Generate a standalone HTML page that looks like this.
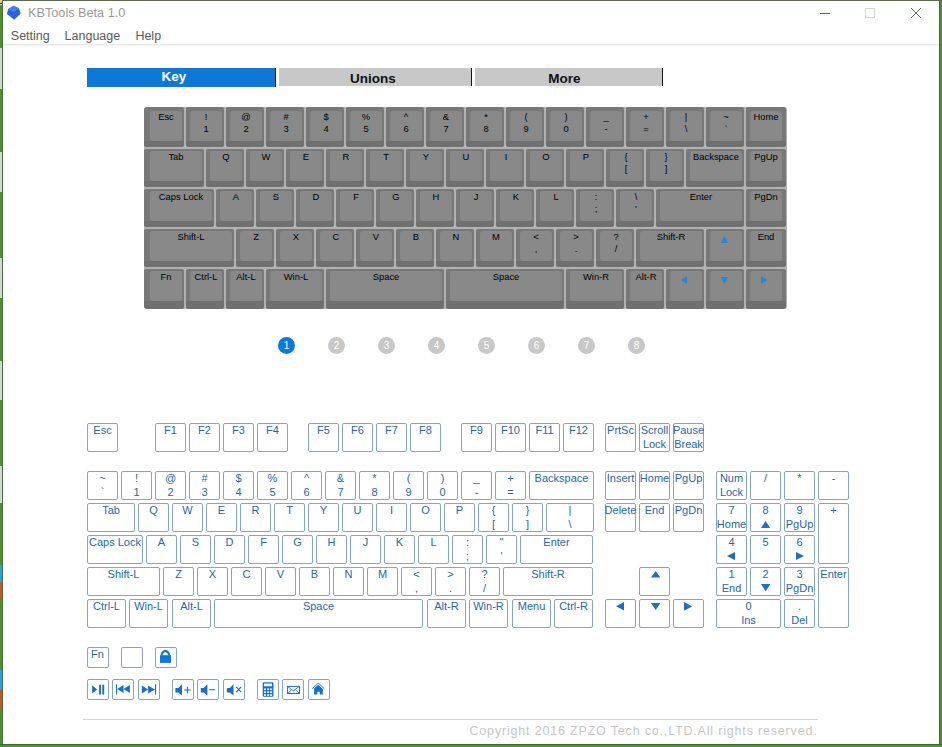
<!DOCTYPE html><html><head><meta charset="utf-8"><style>
*{margin:0;padding:0;box-sizing:border-box}
html,body{width:942px;height:747px;overflow:hidden;background:#4a8a2a;font-family:"Liberation Sans", sans-serif}
.a{position:absolute}
.kb{position:absolute;left:144px;top:107px;width:643px;height:202px;background:#b2b2b2;border-radius:3px;overflow:hidden}
.uk{position:absolute;background:#7b7b7b;border-radius:2px}
.ui{position:absolute;background:#898989;border-radius:3px}
.ut{position:absolute;text-align:center;font-size:9.4px;line-height:9px;height:9px;color:#000;white-space:nowrap}
.lk{position:absolute;border:1px solid #86a4c4;border-radius:2px;background:#fff}
.lt{position:absolute;left:-8px;right:-8px;text-align:center;font-size:11px;line-height:11px;height:11px;color:#2566ae;white-space:nowrap}
.dot{position:absolute;width:17.5px;height:17.5px;border-radius:50%;background:#c8c8c8;color:#fff;font-size:10px;line-height:17.5px;text-align:center}
</style></head><body>
<div class="a" style="left:0;top:0;width:942px;height:747px;background:#4f8f30"></div>
<div class="a" style="left:2px;top:0;width:1px;height:747px;background:#44703a"></div>
<div class="a" style="left:0;top:744px;width:942px;height:1px;background:#3d6a2a"></div>
<div class="a" style="left:939px;top:0;width:1px;height:745px;background:#3d6a2a"></div>
<div class="a" style="left:0;top:0;width:942px;height:1px;background:#5a6a4a"></div>
<div class="a" style="left:0;top:48px;width:2px;height:41px;background:#d6d6d6"></div>
<div class="a" style="left:0;top:152px;width:2px;height:40px;background:#d6d6d6"></div>
<div class="a" style="left:0;top:258px;width:2px;height:40px;background:#d6d6d6"></div>
<div class="a" style="left:0;top:361px;width:2px;height:39px;background:#d6d6d6"></div>
<div class="a" style="left:0;top:466px;width:2px;height:37px;background:#d6d6d6"></div>
<div class="a" style="left:0;top:565px;width:2px;height:17px;background:#2a9fdc"></div>
<div class="a" style="left:0;top:582px;width:2px;height:18px;background:#c8542e"></div>
<div class="a" style="left:0;top:670px;width:2px;height:20px;background:#2a9fdc"></div>
<div class="a" style="left:0;top:690px;width:2px;height:20px;background:#c8542e"></div>
<div class="a" style="left:0;top:0;width:2px;height:3px;background:#d8c890"></div>
<div class="a" style="left:0;top:3px;width:2px;height:1px;background:#202020"></div>
<div class="a" style="left:0;top:4px;width:2px;height:1px;background:#e0e0e0"></div>
<div class="a" style="left:3px;top:1px;width:936px;height:743px;background:#fff"></div>
<svg class="a" style="left:6px;top:5px" width="16" height="16" viewBox="6 5 16 16"><polygon points="13.4,5.8 19,8.2 20.6,13.8 14.2,19.7 6.9,14 8,9.2" fill="#2f62da"/><polygon points="13.4,5.8 19,8.2 14,12 8,9.2" fill="#4a80ee"/></svg>
<div class="a" style="left:28px;top:6.3px;font-size:12.7px;line-height:15px;color:#9a9a9a;white-space:nowrap">KBTools Beta 1.0</div>
<div class="a" style="left:820px;top:13px;width:10px;height:1px;background:#666"></div>
<div class="a" style="left:865px;top:8px;width:10px;height:10px;border:1px solid #d4d4d4"></div>
<svg class="a" style="left:910px;top:7px" width="12" height="12" viewBox="0 0 12 12"><path d="M1 1L11 11M11 1L1 11" stroke="#666" stroke-width="1"/></svg>
<div class="a" style="left:10.8px;top:29px;font-size:12.5px;line-height:15px;color:#5a5a5a;white-space:nowrap">Setting</div>
<div class="a" style="left:64.6px;top:29px;font-size:12.5px;line-height:15px;color:#5a5a5a;white-space:nowrap">Language</div>
<div class="a" style="left:135.4px;top:29px;font-size:12.5px;line-height:15px;color:#5a5a5a;white-space:nowrap">Help</div>
<div class="a" style="left:3px;top:44px;width:936px;height:1px;background:#e8e8e8"></div>
<div class="a" style="left:3px;top:45px;width:936px;height:1px;background:#f4f4f4"></div>
<div class="a" style="left:87px;top:68px;width:188px;height:19px;background:#0f78d7"></div>
<div class="a" style="left:124px;top:66.5px;width:100px;height:20px;color:#fff;font-size:13.5px;font-weight:bold;line-height:20px;text-align:center">Key</div>
<div class="a" style="left:275px;top:68px;width:1px;height:19px;background:#12122a"></div>
<div class="a" style="left:279px;top:68px;width:192px;height:18px;background:#c8c8c8"></div>
<div class="a" style="left:322.8px;top:69px;width:100px;height:20px;color:#111;font-size:13.5px;font-weight:bold;line-height:20px;text-align:center">Unions</div>
<div class="a" style="left:471px;top:68px;width:1px;height:18px;background:#12122a"></div>
<div class="a" style="left:475px;top:68px;width:187px;height:18px;background:#c8c8c8"></div>
<div class="a" style="left:514.5px;top:69px;width:100px;height:20px;color:#111;font-size:13.5px;font-weight:bold;line-height:20px;text-align:center">More</div>
<div class="a" style="left:662px;top:68px;width:1px;height:18px;background:#12122a"></div>
<div class="kb">
<div class="uk" style="left:0.0px;top:0px;width:40.0px;height:40px;background:linear-gradient(#787878 0,#787878 34px,#707070 34px)"></div>
<div class="ui" style="left:6.0px;top:4px;width:32px;height:30px"></div>
<div class="ut" style="left:-8.0px;width:60px;top:4.8px">Esc</div>
<div class="uk" style="left:42.0px;top:0px;width:38.0px;height:40px;background:linear-gradient(#787878 0,#787878 34px,#707070 34px)"></div>
<div class="ui" style="left:46.0px;top:4px;width:32px;height:30px"></div>
<div class="ut" style="left:32.0px;width:60px;top:4.8px">!</div>
<div class="ut" style="left:32.0px;width:60px;top:17.1px">1</div>
<div class="uk" style="left:82.0px;top:0px;width:38.0px;height:40px;background:linear-gradient(#787878 0,#787878 34px,#707070 34px)"></div>
<div class="ui" style="left:86.0px;top:4px;width:32px;height:30px"></div>
<div class="ut" style="left:72.0px;width:60px;top:4.8px">@</div>
<div class="ut" style="left:72.0px;width:60px;top:17.1px">2</div>
<div class="uk" style="left:122.0px;top:0px;width:38.0px;height:40px;background:linear-gradient(#787878 0,#787878 34px,#707070 34px)"></div>
<div class="ui" style="left:126.0px;top:4px;width:32px;height:30px"></div>
<div class="ut" style="left:112.0px;width:60px;top:4.8px">#</div>
<div class="ut" style="left:112.0px;width:60px;top:17.1px">3</div>
<div class="uk" style="left:162.0px;top:0px;width:38.0px;height:40px;background:linear-gradient(#787878 0,#787878 34px,#707070 34px)"></div>
<div class="ui" style="left:166.0px;top:4px;width:32px;height:30px"></div>
<div class="ut" style="left:152.0px;width:60px;top:4.8px">$</div>
<div class="ut" style="left:152.0px;width:60px;top:17.1px">4</div>
<div class="uk" style="left:202.0px;top:0px;width:38.0px;height:40px;background:linear-gradient(#787878 0,#787878 34px,#707070 34px)"></div>
<div class="ui" style="left:206.0px;top:4px;width:32px;height:30px"></div>
<div class="ut" style="left:192.0px;width:60px;top:4.8px">%</div>
<div class="ut" style="left:192.0px;width:60px;top:17.1px">5</div>
<div class="uk" style="left:242.0px;top:0px;width:38.0px;height:40px;background:linear-gradient(#787878 0,#787878 34px,#707070 34px)"></div>
<div class="ui" style="left:246.0px;top:4px;width:32px;height:30px"></div>
<div class="ut" style="left:232.0px;width:60px;top:4.8px">^</div>
<div class="ut" style="left:232.0px;width:60px;top:17.1px">6</div>
<div class="uk" style="left:282.0px;top:0px;width:38.0px;height:40px;background:linear-gradient(#787878 0,#787878 34px,#707070 34px)"></div>
<div class="ui" style="left:286.0px;top:4px;width:32px;height:30px"></div>
<div class="ut" style="left:272.0px;width:60px;top:4.8px">&amp;</div>
<div class="ut" style="left:272.0px;width:60px;top:17.1px">7</div>
<div class="uk" style="left:322.0px;top:0px;width:38.0px;height:40px;background:linear-gradient(#787878 0,#787878 34px,#707070 34px)"></div>
<div class="ui" style="left:326.0px;top:4px;width:32px;height:30px"></div>
<div class="ut" style="left:312.0px;width:60px;top:4.8px">*</div>
<div class="ut" style="left:312.0px;width:60px;top:17.1px">8</div>
<div class="uk" style="left:362.0px;top:0px;width:38.0px;height:40px;background:linear-gradient(#787878 0,#787878 34px,#707070 34px)"></div>
<div class="ui" style="left:366.0px;top:4px;width:32px;height:30px"></div>
<div class="ut" style="left:352.0px;width:60px;top:4.8px">(</div>
<div class="ut" style="left:352.0px;width:60px;top:17.1px">9</div>
<div class="uk" style="left:402.0px;top:0px;width:38.0px;height:40px;background:linear-gradient(#787878 0,#787878 34px,#707070 34px)"></div>
<div class="ui" style="left:406.0px;top:4px;width:32px;height:30px"></div>
<div class="ut" style="left:392.0px;width:60px;top:4.8px">)</div>
<div class="ut" style="left:392.0px;width:60px;top:17.1px">0</div>
<div class="uk" style="left:442.0px;top:0px;width:38.0px;height:40px;background:linear-gradient(#787878 0,#787878 34px,#707070 34px)"></div>
<div class="ui" style="left:446.0px;top:4px;width:32px;height:30px"></div>
<div class="ut" style="left:432.0px;width:60px;top:4.8px">_</div>
<div class="ut" style="left:432.0px;width:60px;top:17.1px">-</div>
<div class="uk" style="left:482.0px;top:0px;width:38.0px;height:40px;background:linear-gradient(#787878 0,#787878 34px,#707070 34px)"></div>
<div class="ui" style="left:486.0px;top:4px;width:32px;height:30px"></div>
<div class="ut" style="left:472.0px;width:60px;top:4.8px">+</div>
<div class="ut" style="left:472.0px;width:60px;top:17.1px">=</div>
<div class="uk" style="left:522.0px;top:0px;width:38.0px;height:40px;background:linear-gradient(#787878 0,#787878 34px,#707070 34px)"></div>
<div class="ui" style="left:526.0px;top:4px;width:32px;height:30px"></div>
<div class="ut" style="left:512.0px;width:60px;top:4.8px">|</div>
<div class="ut" style="left:512.0px;width:60px;top:17.1px">\</div>
<div class="uk" style="left:562.0px;top:0px;width:38.0px;height:40px;background:linear-gradient(#787878 0,#787878 34px,#707070 34px)"></div>
<div class="ui" style="left:566.0px;top:4px;width:32px;height:30px"></div>
<div class="ut" style="left:552.0px;width:60px;top:4.8px">~</div>
<div class="ut" style="left:552.0px;width:60px;top:17.1px">`</div>
<div class="uk" style="left:602.0px;top:0px;width:40.0px;height:40px;background:linear-gradient(#787878 0,#787878 34px,#707070 34px)"></div>
<div class="ui" style="left:606.0px;top:4px;width:32px;height:30px"></div>
<div class="ut" style="left:592.0px;width:60px;top:4.8px">Home</div>
<div class="uk" style="left:0.0px;top:42px;width:60.0px;height:38px;background:linear-gradient(#787878 0,#787878 32px,#707070 32px)"></div>
<div class="ui" style="left:6.0px;top:44px;width:52.0px;height:30px"></div>
<div class="ut" style="left:2.0px;width:60px;top:44.8px">Tab</div>
<div class="uk" style="left:62.0px;top:42px;width:38.0px;height:38px;background:linear-gradient(#787878 0,#787878 32px,#707070 32px)"></div>
<div class="ui" style="left:66.0px;top:44px;width:32px;height:30px"></div>
<div class="ut" style="left:52.0px;width:60px;top:44.8px">Q</div>
<div class="uk" style="left:102.0px;top:42px;width:38.0px;height:38px;background:linear-gradient(#787878 0,#787878 32px,#707070 32px)"></div>
<div class="ui" style="left:106.0px;top:44px;width:32px;height:30px"></div>
<div class="ut" style="left:92.0px;width:60px;top:44.8px">W</div>
<div class="uk" style="left:142.0px;top:42px;width:38.0px;height:38px;background:linear-gradient(#787878 0,#787878 32px,#707070 32px)"></div>
<div class="ui" style="left:146.0px;top:44px;width:32px;height:30px"></div>
<div class="ut" style="left:132.0px;width:60px;top:44.8px">E</div>
<div class="uk" style="left:182.0px;top:42px;width:38.0px;height:38px;background:linear-gradient(#787878 0,#787878 32px,#707070 32px)"></div>
<div class="ui" style="left:186.0px;top:44px;width:32px;height:30px"></div>
<div class="ut" style="left:172.0px;width:60px;top:44.8px">R</div>
<div class="uk" style="left:222.0px;top:42px;width:38.0px;height:38px;background:linear-gradient(#787878 0,#787878 32px,#707070 32px)"></div>
<div class="ui" style="left:226.0px;top:44px;width:32px;height:30px"></div>
<div class="ut" style="left:212.0px;width:60px;top:44.8px">T</div>
<div class="uk" style="left:262.0px;top:42px;width:38.0px;height:38px;background:linear-gradient(#787878 0,#787878 32px,#707070 32px)"></div>
<div class="ui" style="left:266.0px;top:44px;width:32px;height:30px"></div>
<div class="ut" style="left:252.0px;width:60px;top:44.8px">Y</div>
<div class="uk" style="left:302.0px;top:42px;width:38.0px;height:38px;background:linear-gradient(#787878 0,#787878 32px,#707070 32px)"></div>
<div class="ui" style="left:306.0px;top:44px;width:32px;height:30px"></div>
<div class="ut" style="left:292.0px;width:60px;top:44.8px">U</div>
<div class="uk" style="left:342.0px;top:42px;width:38.0px;height:38px;background:linear-gradient(#787878 0,#787878 32px,#707070 32px)"></div>
<div class="ui" style="left:346.0px;top:44px;width:32px;height:30px"></div>
<div class="ut" style="left:332.0px;width:60px;top:44.8px">I</div>
<div class="uk" style="left:382.0px;top:42px;width:38.0px;height:38px;background:linear-gradient(#787878 0,#787878 32px,#707070 32px)"></div>
<div class="ui" style="left:386.0px;top:44px;width:32px;height:30px"></div>
<div class="ut" style="left:372.0px;width:60px;top:44.8px">O</div>
<div class="uk" style="left:422.0px;top:42px;width:38.0px;height:38px;background:linear-gradient(#787878 0,#787878 32px,#707070 32px)"></div>
<div class="ui" style="left:426.0px;top:44px;width:32px;height:30px"></div>
<div class="ut" style="left:412.0px;width:60px;top:44.8px">P</div>
<div class="uk" style="left:462.0px;top:42px;width:38.0px;height:38px;background:linear-gradient(#787878 0,#787878 32px,#707070 32px)"></div>
<div class="ui" style="left:466.0px;top:44px;width:32px;height:30px"></div>
<div class="ut" style="left:452.0px;width:60px;top:44.8px">{</div>
<div class="ut" style="left:452.0px;width:60px;top:57.099999999999994px">[</div>
<div class="uk" style="left:502.0px;top:42px;width:38.0px;height:38px;background:linear-gradient(#787878 0,#787878 32px,#707070 32px)"></div>
<div class="ui" style="left:506.0px;top:44px;width:32px;height:30px"></div>
<div class="ut" style="left:492.0px;width:60px;top:44.8px">}</div>
<div class="ut" style="left:492.0px;width:60px;top:57.099999999999994px">]</div>
<div class="uk" style="left:542.0px;top:42px;width:58.0px;height:38px;background:linear-gradient(#787878 0,#787878 32px,#707070 32px)"></div>
<div class="ui" style="left:546.0px;top:44px;width:52.0px;height:30px"></div>
<div class="ut" style="left:542.0px;width:60px;top:44.8px">Backspace</div>
<div class="uk" style="left:602.0px;top:42px;width:40.0px;height:38px;background:linear-gradient(#787878 0,#787878 32px,#707070 32px)"></div>
<div class="ui" style="left:606.0px;top:44px;width:32px;height:30px"></div>
<div class="ut" style="left:592.0px;width:60px;top:44.8px">PgUp</div>
<div class="uk" style="left:0.0px;top:82px;width:70.0px;height:38px;background:linear-gradient(#787878 0,#787878 32px,#707070 32px)"></div>
<div class="ui" style="left:6.0px;top:84px;width:62.0px;height:30px"></div>
<div class="ut" style="left:7.0px;width:60px;top:84.8px">Caps Lock</div>
<div class="uk" style="left:72.0px;top:82px;width:38.0px;height:38px;background:linear-gradient(#787878 0,#787878 32px,#707070 32px)"></div>
<div class="ui" style="left:76.0px;top:84px;width:32px;height:30px"></div>
<div class="ut" style="left:62.0px;width:60px;top:84.8px">A</div>
<div class="uk" style="left:112.0px;top:82px;width:38.0px;height:38px;background:linear-gradient(#787878 0,#787878 32px,#707070 32px)"></div>
<div class="ui" style="left:116.0px;top:84px;width:32px;height:30px"></div>
<div class="ut" style="left:102.0px;width:60px;top:84.8px">S</div>
<div class="uk" style="left:152.0px;top:82px;width:38.0px;height:38px;background:linear-gradient(#787878 0,#787878 32px,#707070 32px)"></div>
<div class="ui" style="left:156.0px;top:84px;width:32px;height:30px"></div>
<div class="ut" style="left:142.0px;width:60px;top:84.8px">D</div>
<div class="uk" style="left:192.0px;top:82px;width:38.0px;height:38px;background:linear-gradient(#787878 0,#787878 32px,#707070 32px)"></div>
<div class="ui" style="left:196.0px;top:84px;width:32px;height:30px"></div>
<div class="ut" style="left:182.0px;width:60px;top:84.8px">F</div>
<div class="uk" style="left:232.0px;top:82px;width:38.0px;height:38px;background:linear-gradient(#787878 0,#787878 32px,#707070 32px)"></div>
<div class="ui" style="left:236.0px;top:84px;width:32px;height:30px"></div>
<div class="ut" style="left:222.0px;width:60px;top:84.8px">G</div>
<div class="uk" style="left:272.0px;top:82px;width:38.0px;height:38px;background:linear-gradient(#787878 0,#787878 32px,#707070 32px)"></div>
<div class="ui" style="left:276.0px;top:84px;width:32px;height:30px"></div>
<div class="ut" style="left:262.0px;width:60px;top:84.8px">H</div>
<div class="uk" style="left:312.0px;top:82px;width:38.0px;height:38px;background:linear-gradient(#787878 0,#787878 32px,#707070 32px)"></div>
<div class="ui" style="left:316.0px;top:84px;width:32px;height:30px"></div>
<div class="ut" style="left:302.0px;width:60px;top:84.8px">J</div>
<div class="uk" style="left:352.0px;top:82px;width:38.0px;height:38px;background:linear-gradient(#787878 0,#787878 32px,#707070 32px)"></div>
<div class="ui" style="left:356.0px;top:84px;width:32px;height:30px"></div>
<div class="ut" style="left:342.0px;width:60px;top:84.8px">K</div>
<div class="uk" style="left:392.0px;top:82px;width:38.0px;height:38px;background:linear-gradient(#787878 0,#787878 32px,#707070 32px)"></div>
<div class="ui" style="left:396.0px;top:84px;width:32px;height:30px"></div>
<div class="ut" style="left:382.0px;width:60px;top:84.8px">L</div>
<div class="uk" style="left:432.0px;top:82px;width:38.0px;height:38px;background:linear-gradient(#787878 0,#787878 32px,#707070 32px)"></div>
<div class="ui" style="left:436.0px;top:84px;width:32px;height:30px"></div>
<div class="ut" style="left:422.0px;width:60px;top:84.8px">:</div>
<div class="ut" style="left:422.0px;width:60px;top:97.1px">;</div>
<div class="uk" style="left:472.0px;top:82px;width:38.0px;height:38px;background:linear-gradient(#787878 0,#787878 32px,#707070 32px)"></div>
<div class="ui" style="left:476.0px;top:84px;width:32px;height:30px"></div>
<div class="ut" style="left:462.0px;width:60px;top:84.8px">\</div>
<div class="ut" style="left:462.0px;width:60px;top:97.1px">'</div>
<div class="uk" style="left:512.0px;top:82px;width:88.0px;height:38px;background:linear-gradient(#787878 0,#787878 32px,#707070 32px)"></div>
<div class="ui" style="left:516.0px;top:84px;width:82.0px;height:30px"></div>
<div class="ut" style="left:527.0px;width:60px;top:84.8px">Enter</div>
<div class="uk" style="left:602.0px;top:82px;width:40.0px;height:38px;background:linear-gradient(#787878 0,#787878 32px,#707070 32px)"></div>
<div class="ui" style="left:606.0px;top:84px;width:32px;height:30px"></div>
<div class="ut" style="left:592.0px;width:60px;top:84.8px">PgDn</div>
<div class="uk" style="left:0.0px;top:122px;width:90.0px;height:38px;background:linear-gradient(#787878 0,#787878 32px,#707070 32px)"></div>
<div class="ui" style="left:6.0px;top:124px;width:82.0px;height:30px"></div>
<div class="ut" style="left:17.0px;width:60px;top:124.8px">Shift-L</div>
<div class="uk" style="left:92.0px;top:122px;width:38.0px;height:38px;background:linear-gradient(#787878 0,#787878 32px,#707070 32px)"></div>
<div class="ui" style="left:96.0px;top:124px;width:32px;height:30px"></div>
<div class="ut" style="left:82.0px;width:60px;top:124.8px">Z</div>
<div class="uk" style="left:132.0px;top:122px;width:38.0px;height:38px;background:linear-gradient(#787878 0,#787878 32px,#707070 32px)"></div>
<div class="ui" style="left:136.0px;top:124px;width:32px;height:30px"></div>
<div class="ut" style="left:122.0px;width:60px;top:124.8px">X</div>
<div class="uk" style="left:172.0px;top:122px;width:38.0px;height:38px;background:linear-gradient(#787878 0,#787878 32px,#707070 32px)"></div>
<div class="ui" style="left:176.0px;top:124px;width:32px;height:30px"></div>
<div class="ut" style="left:162.0px;width:60px;top:124.8px">C</div>
<div class="uk" style="left:212.0px;top:122px;width:38.0px;height:38px;background:linear-gradient(#787878 0,#787878 32px,#707070 32px)"></div>
<div class="ui" style="left:216.0px;top:124px;width:32px;height:30px"></div>
<div class="ut" style="left:202.0px;width:60px;top:124.8px">V</div>
<div class="uk" style="left:252.0px;top:122px;width:38.0px;height:38px;background:linear-gradient(#787878 0,#787878 32px,#707070 32px)"></div>
<div class="ui" style="left:256.0px;top:124px;width:32px;height:30px"></div>
<div class="ut" style="left:242.0px;width:60px;top:124.8px">B</div>
<div class="uk" style="left:292.0px;top:122px;width:38.0px;height:38px;background:linear-gradient(#787878 0,#787878 32px,#707070 32px)"></div>
<div class="ui" style="left:296.0px;top:124px;width:32px;height:30px"></div>
<div class="ut" style="left:282.0px;width:60px;top:124.8px">N</div>
<div class="uk" style="left:332.0px;top:122px;width:38.0px;height:38px;background:linear-gradient(#787878 0,#787878 32px,#707070 32px)"></div>
<div class="ui" style="left:336.0px;top:124px;width:32px;height:30px"></div>
<div class="ut" style="left:322.0px;width:60px;top:124.8px">M</div>
<div class="uk" style="left:372.0px;top:122px;width:38.0px;height:38px;background:linear-gradient(#787878 0,#787878 32px,#707070 32px)"></div>
<div class="ui" style="left:376.0px;top:124px;width:32px;height:30px"></div>
<div class="ut" style="left:362.0px;width:60px;top:124.8px">&lt;</div>
<div class="ut" style="left:362.0px;width:60px;top:137.1px">,</div>
<div class="uk" style="left:412.0px;top:122px;width:38.0px;height:38px;background:linear-gradient(#787878 0,#787878 32px,#707070 32px)"></div>
<div class="ui" style="left:416.0px;top:124px;width:32px;height:30px"></div>
<div class="ut" style="left:402.0px;width:60px;top:124.8px">&gt;</div>
<div class="ut" style="left:402.0px;width:60px;top:137.1px">.</div>
<div class="uk" style="left:452.0px;top:122px;width:38.0px;height:38px;background:linear-gradient(#787878 0,#787878 32px,#707070 32px)"></div>
<div class="ui" style="left:456.0px;top:124px;width:32px;height:30px"></div>
<div class="ut" style="left:442.0px;width:60px;top:124.8px">?</div>
<div class="ut" style="left:442.0px;width:60px;top:137.1px">/</div>
<div class="uk" style="left:492.0px;top:122px;width:68.0px;height:38px;background:linear-gradient(#787878 0,#787878 32px,#707070 32px)"></div>
<div class="ui" style="left:496.0px;top:124px;width:62.0px;height:30px"></div>
<div class="ut" style="left:497.0px;width:60px;top:124.8px">Shift-R</div>
<div class="uk" style="left:562.0px;top:122px;width:38.0px;height:38px;background:linear-gradient(#787878 0,#787878 32px,#707070 32px)"></div>
<div class="ui" style="left:566.0px;top:124px;width:32px;height:30px"></div>
<svg class="a" style="left:576.7px;top:128.9px" width="7" height="7" viewBox="0 0 7 7"><polygon points="3.5,0 7,7 0,7" fill="#1e88e0"/></svg>
<div class="uk" style="left:602.0px;top:122px;width:40.0px;height:38px;background:linear-gradient(#787878 0,#787878 32px,#707070 32px)"></div>
<div class="ui" style="left:606.0px;top:124px;width:32px;height:30px"></div>
<div class="ut" style="left:592.0px;width:60px;top:124.8px">End</div>
<div class="uk" style="left:0.0px;top:162px;width:40.0px;height:40px;background:linear-gradient(#787878 0,#787878 32px,#707070 32px)"></div>
<div class="ui" style="left:6.0px;top:164px;width:32px;height:30px"></div>
<div class="ut" style="left:-8.0px;width:60px;top:164.8px">Fn</div>
<div class="uk" style="left:42.0px;top:162px;width:38.0px;height:40px;background:linear-gradient(#787878 0,#787878 32px,#707070 32px)"></div>
<div class="ui" style="left:46.0px;top:164px;width:32px;height:30px"></div>
<div class="ut" style="left:32.0px;width:60px;top:164.8px">Ctrl-L</div>
<div class="uk" style="left:82.0px;top:162px;width:38.0px;height:40px;background:linear-gradient(#787878 0,#787878 32px,#707070 32px)"></div>
<div class="ui" style="left:86.0px;top:164px;width:32px;height:30px"></div>
<div class="ut" style="left:72.0px;width:60px;top:164.8px">Alt-L</div>
<div class="uk" style="left:122.0px;top:162px;width:58.0px;height:40px;background:linear-gradient(#787878 0,#787878 32px,#707070 32px)"></div>
<div class="ui" style="left:126.0px;top:164px;width:52.0px;height:30px"></div>
<div class="ut" style="left:122.0px;width:60px;top:164.8px">Win-L</div>
<div class="uk" style="left:182.0px;top:162px;width:118.0px;height:40px;background:linear-gradient(#787878 0,#787878 32px,#707070 32px)"></div>
<div class="ui" style="left:186.0px;top:164px;width:112px;height:30px"></div>
<div class="ut" style="left:212.0px;width:60px;top:164.8px">Space</div>
<div class="uk" style="left:302.0px;top:162px;width:118.0px;height:40px;background:linear-gradient(#787878 0,#787878 32px,#707070 32px)"></div>
<div class="ui" style="left:306.0px;top:164px;width:112px;height:30px"></div>
<div class="ut" style="left:332.0px;width:60px;top:164.8px">Space</div>
<div class="uk" style="left:422.0px;top:162px;width:58.0px;height:40px;background:linear-gradient(#787878 0,#787878 32px,#707070 32px)"></div>
<div class="ui" style="left:426.0px;top:164px;width:52.0px;height:30px"></div>
<div class="ut" style="left:422.0px;width:60px;top:164.8px">Win-R</div>
<div class="uk" style="left:482.0px;top:162px;width:38.0px;height:40px;background:linear-gradient(#787878 0,#787878 32px,#707070 32px)"></div>
<div class="ui" style="left:486.0px;top:164px;width:32px;height:30px"></div>
<div class="ut" style="left:472.0px;width:60px;top:164.8px">Alt-R</div>
<div class="uk" style="left:522.0px;top:162px;width:38.0px;height:40px;background:linear-gradient(#787878 0,#787878 32px,#707070 32px)"></div>
<div class="ui" style="left:526.0px;top:164px;width:32px;height:30px"></div>
<svg class="a" style="left:537.0px;top:168.8px" width="6.4" height="8" viewBox="0 0 6.4 8"><polygon points="6.4,0 6.4,8 0,4" fill="#1e88e0"/></svg>
<div class="uk" style="left:562.0px;top:162px;width:38.0px;height:40px;background:linear-gradient(#787878 0,#787878 32px,#707070 32px)"></div>
<div class="ui" style="left:566.0px;top:164px;width:32px;height:30px"></div>
<svg class="a" style="left:576.7px;top:169.9px" width="7" height="7" viewBox="0 0 7 7"><polygon points="0,0 7,0 3.5,7" fill="#1e88e0"/></svg>
<div class="uk" style="left:602.0px;top:162px;width:40.0px;height:40px;background:linear-gradient(#787878 0,#787878 32px,#707070 32px)"></div>
<div class="ui" style="left:606.0px;top:164px;width:32px;height:30px"></div>
<svg class="a" style="left:617.0px;top:168.8px" width="6.4" height="8" viewBox="0 0 6.4 8"><polygon points="0,0 6.4,4 0,8" fill="#1e88e0"/></svg>
</div>
<div class="dot" style="left:277.75px;top:336.75px;background:#0f78d7">1</div>
<div class="dot" style="left:327.75px;top:336.75px;background:#c8c8c8">2</div>
<div class="dot" style="left:377.75px;top:336.75px;background:#c8c8c8">3</div>
<div class="dot" style="left:427.75px;top:336.75px;background:#c8c8c8">4</div>
<div class="dot" style="left:477.75px;top:336.75px;background:#c8c8c8">5</div>
<div class="dot" style="left:527.75px;top:336.75px;background:#c8c8c8">6</div>
<div class="dot" style="left:577.75px;top:336.75px;background:#c8c8c8">7</div>
<div class="dot" style="left:627.75px;top:336.75px;background:#c8c8c8">8</div>
<div class="lk" style="left:87px;top:423px;width:31px;height:29px"><div class="lt" style="top:0.9px">Esc</div></div>
<div class="lk" style="left:155px;top:423px;width:31px;height:29px"><div class="lt" style="top:0.9px">F1</div></div>
<div class="lk" style="left:189px;top:423px;width:31px;height:29px"><div class="lt" style="top:0.9px">F2</div></div>
<div class="lk" style="left:223px;top:423px;width:31px;height:29px"><div class="lt" style="top:0.9px">F3</div></div>
<div class="lk" style="left:257px;top:423px;width:31px;height:29px"><div class="lt" style="top:0.9px">F4</div></div>
<div class="lk" style="left:308px;top:423px;width:31px;height:29px"><div class="lt" style="top:0.9px">F5</div></div>
<div class="lk" style="left:342px;top:423px;width:31px;height:29px"><div class="lt" style="top:0.9px">F6</div></div>
<div class="lk" style="left:376px;top:423px;width:31px;height:29px"><div class="lt" style="top:0.9px">F7</div></div>
<div class="lk" style="left:410px;top:423px;width:31px;height:29px"><div class="lt" style="top:0.9px">F8</div></div>
<div class="lk" style="left:461px;top:423px;width:31px;height:29px"><div class="lt" style="top:0.9px">F9</div></div>
<div class="lk" style="left:495px;top:423px;width:31px;height:29px"><div class="lt" style="top:0.9px">F10</div></div>
<div class="lk" style="left:529px;top:423px;width:31px;height:29px"><div class="lt" style="top:0.9px">F11</div></div>
<div class="lk" style="left:563px;top:423px;width:31px;height:29px"><div class="lt" style="top:0.9px">F12</div></div>
<div class="lk" style="left:605px;top:423px;width:31px;height:29px"><div class="lt" style="top:0.9px">PrtSc</div></div>
<div class="lk" style="left:639px;top:423px;width:31px;height:29px"><div class="lt" style="top:0.9px">Scroll</div><div class="lt" style="top:14.9px">Lock</div></div>
<div class="lk" style="left:673px;top:423px;width:31px;height:29px"><div class="lt" style="top:0.9px">Pause</div><div class="lt" style="top:14.9px">Break</div></div>
<div class="lk" style="left:87px;top:471px;width:31px;height:29px"><div class="lt" style="top:0.9px">~</div><div class="lt" style="top:14.9px">`</div></div>
<div class="lk" style="left:121px;top:471px;width:31px;height:29px"><div class="lt" style="top:0.9px">!</div><div class="lt" style="top:14.9px">1</div></div>
<div class="lk" style="left:155px;top:471px;width:31px;height:29px"><div class="lt" style="top:0.9px">@</div><div class="lt" style="top:14.9px">2</div></div>
<div class="lk" style="left:189px;top:471px;width:31px;height:29px"><div class="lt" style="top:0.9px">#</div><div class="lt" style="top:14.9px">3</div></div>
<div class="lk" style="left:223px;top:471px;width:31px;height:29px"><div class="lt" style="top:0.9px">$</div><div class="lt" style="top:14.9px">4</div></div>
<div class="lk" style="left:257px;top:471px;width:31px;height:29px"><div class="lt" style="top:0.9px">%</div><div class="lt" style="top:14.9px">5</div></div>
<div class="lk" style="left:291px;top:471px;width:31px;height:29px"><div class="lt" style="top:0.9px">^</div><div class="lt" style="top:14.9px">6</div></div>
<div class="lk" style="left:325px;top:471px;width:31px;height:29px"><div class="lt" style="top:0.9px">&amp;</div><div class="lt" style="top:14.9px">7</div></div>
<div class="lk" style="left:359px;top:471px;width:31px;height:29px"><div class="lt" style="top:0.9px">*</div><div class="lt" style="top:14.9px">8</div></div>
<div class="lk" style="left:393px;top:471px;width:31px;height:29px"><div class="lt" style="top:0.9px">(</div><div class="lt" style="top:14.9px">9</div></div>
<div class="lk" style="left:427px;top:471px;width:31px;height:29px"><div class="lt" style="top:0.9px">)</div><div class="lt" style="top:14.9px">0</div></div>
<div class="lk" style="left:461px;top:471px;width:31px;height:29px"><div class="lt" style="top:0.9px">_</div><div class="lt" style="top:14.9px">-</div></div>
<div class="lk" style="left:495px;top:471px;width:31px;height:29px"><div class="lt" style="top:0.9px">+</div><div class="lt" style="top:14.9px">=</div></div>
<div class="lk" style="left:529px;top:471px;width:65px;height:29px"><div class="lt" style="top:0.9px">Backspace</div></div>
<div class="lk" style="left:87px;top:503px;width:48px;height:29px"><div class="lt" style="top:0.9px">Tab</div></div>
<div class="lk" style="left:138px;top:503px;width:31px;height:29px"><div class="lt" style="top:0.9px">Q</div></div>
<div class="lk" style="left:172px;top:503px;width:31px;height:29px"><div class="lt" style="top:0.9px">W</div></div>
<div class="lk" style="left:206px;top:503px;width:31px;height:29px"><div class="lt" style="top:0.9px">E</div></div>
<div class="lk" style="left:240px;top:503px;width:31px;height:29px"><div class="lt" style="top:0.9px">R</div></div>
<div class="lk" style="left:274px;top:503px;width:31px;height:29px"><div class="lt" style="top:0.9px">T</div></div>
<div class="lk" style="left:308px;top:503px;width:31px;height:29px"><div class="lt" style="top:0.9px">Y</div></div>
<div class="lk" style="left:342px;top:503px;width:31px;height:29px"><div class="lt" style="top:0.9px">U</div></div>
<div class="lk" style="left:376px;top:503px;width:31px;height:29px"><div class="lt" style="top:0.9px">I</div></div>
<div class="lk" style="left:410px;top:503px;width:31px;height:29px"><div class="lt" style="top:0.9px">O</div></div>
<div class="lk" style="left:444px;top:503px;width:31px;height:29px"><div class="lt" style="top:0.9px">P</div></div>
<div class="lk" style="left:478px;top:503px;width:31px;height:29px"><div class="lt" style="top:0.9px">{</div><div class="lt" style="top:14.9px">[</div></div>
<div class="lk" style="left:512px;top:503px;width:31px;height:29px"><div class="lt" style="top:0.9px">}</div><div class="lt" style="top:14.9px">]</div></div>
<div class="lk" style="left:546px;top:503px;width:48px;height:29px"><div class="lt" style="top:0.9px">|</div><div class="lt" style="top:14.9px">\</div></div>
<div class="lk" style="left:87px;top:535px;width:56px;height:29px"><div class="lt" style="top:0.9px">Caps Lock</div></div>
<div class="lk" style="left:146px;top:535px;width:31px;height:29px"><div class="lt" style="top:0.9px">A</div></div>
<div class="lk" style="left:180px;top:535px;width:31px;height:29px"><div class="lt" style="top:0.9px">S</div></div>
<div class="lk" style="left:214px;top:535px;width:31px;height:29px"><div class="lt" style="top:0.9px">D</div></div>
<div class="lk" style="left:248px;top:535px;width:31px;height:29px"><div class="lt" style="top:0.9px">F</div></div>
<div class="lk" style="left:282px;top:535px;width:31px;height:29px"><div class="lt" style="top:0.9px">G</div></div>
<div class="lk" style="left:316px;top:535px;width:31px;height:29px"><div class="lt" style="top:0.9px">H</div></div>
<div class="lk" style="left:350px;top:535px;width:31px;height:29px"><div class="lt" style="top:0.9px">J</div></div>
<div class="lk" style="left:384px;top:535px;width:31px;height:29px"><div class="lt" style="top:0.9px">K</div></div>
<div class="lk" style="left:418px;top:535px;width:31px;height:29px"><div class="lt" style="top:0.9px">L</div></div>
<div class="lk" style="left:452px;top:535px;width:31px;height:29px"><div class="lt" style="top:0.9px">:</div><div class="lt" style="top:14.9px">;</div></div>
<div class="lk" style="left:486px;top:535px;width:31px;height:29px"><div class="lt" style="top:0.9px">"</div><div class="lt" style="top:14.9px">'</div></div>
<div class="lk" style="left:520px;top:535px;width:73px;height:29px"><div class="lt" style="top:0.9px">Enter</div></div>
<div class="lk" style="left:87px;top:567px;width:73px;height:29px"><div class="lt" style="top:0.9px">Shift-L</div></div>
<div class="lk" style="left:163px;top:567px;width:31px;height:29px"><div class="lt" style="top:0.9px">Z</div></div>
<div class="lk" style="left:197px;top:567px;width:31px;height:29px"><div class="lt" style="top:0.9px">X</div></div>
<div class="lk" style="left:231px;top:567px;width:31px;height:29px"><div class="lt" style="top:0.9px">C</div></div>
<div class="lk" style="left:265px;top:567px;width:31px;height:29px"><div class="lt" style="top:0.9px">V</div></div>
<div class="lk" style="left:299px;top:567px;width:31px;height:29px"><div class="lt" style="top:0.9px">B</div></div>
<div class="lk" style="left:333px;top:567px;width:31px;height:29px"><div class="lt" style="top:0.9px">N</div></div>
<div class="lk" style="left:367px;top:567px;width:31px;height:29px"><div class="lt" style="top:0.9px">M</div></div>
<div class="lk" style="left:401px;top:567px;width:31px;height:29px"><div class="lt" style="top:0.9px">&lt;</div><div class="lt" style="top:14.9px">,</div></div>
<div class="lk" style="left:435px;top:567px;width:31px;height:29px"><div class="lt" style="top:0.9px">&gt;</div><div class="lt" style="top:14.9px">.</div></div>
<div class="lk" style="left:469px;top:567px;width:31px;height:29px"><div class="lt" style="top:0.9px">?</div><div class="lt" style="top:14.9px">/</div></div>
<div class="lk" style="left:503px;top:567px;width:90px;height:29px"><div class="lt" style="top:0.9px">Shift-R</div></div>
<div class="lk" style="left:87px;top:599px;width:39px;height:29px"><div class="lt" style="top:0.9px">Ctrl-L</div></div>
<div class="lk" style="left:129px;top:599px;width:39px;height:29px"><div class="lt" style="top:0.9px">Win-L</div></div>
<div class="lk" style="left:172px;top:599px;width:39px;height:29px"><div class="lt" style="top:0.9px">Alt-L</div></div>
<div class="lk" style="left:214px;top:599px;width:209px;height:29px"><div class="lt" style="top:0.9px">Space</div></div>
<div class="lk" style="left:427px;top:599px;width:39px;height:29px"><div class="lt" style="top:0.9px">Alt-R</div></div>
<div class="lk" style="left:469px;top:599px;width:39px;height:29px"><div class="lt" style="top:0.9px">Win-R</div></div>
<div class="lk" style="left:512px;top:599px;width:39px;height:29px"><div class="lt" style="top:0.9px">Menu</div></div>
<div class="lk" style="left:554px;top:599px;width:39px;height:29px"><div class="lt" style="top:0.9px">Ctrl-R</div></div>
<div class="lk" style="left:605px;top:471px;width:31px;height:29px"><div class="lt" style="top:0.9px">Insert</div></div>
<div class="lk" style="left:639px;top:471px;width:31px;height:29px"><div class="lt" style="top:0.9px">Home</div></div>
<div class="lk" style="left:673px;top:471px;width:31px;height:29px"><div class="lt" style="top:0.9px">PgUp</div></div>
<div class="lk" style="left:605px;top:503px;width:31px;height:29px"><div class="lt" style="top:0.9px">Delete</div></div>
<div class="lk" style="left:639px;top:503px;width:31px;height:29px"><div class="lt" style="top:0.9px">End</div></div>
<div class="lk" style="left:673px;top:503px;width:31px;height:29px"><div class="lt" style="top:0.9px">PgDn</div></div>
<div class="lk" style="left:639px;top:567px;width:31px;height:29px"><svg class="a" style="left:10.5px;top:3.3px" width="9.4" height="6.5" viewBox="0 0 9.4 6.5"><polygon points="4.7,0 9.4,6.5 0,6.5" fill="#1a6fc8"/></svg></div>
<div class="lk" style="left:605px;top:599px;width:31px;height:29px"><svg class="a" style="left:10px;top:2.3px" width="8.2" height="8.7" viewBox="0 0 8.2 8.7"><polygon points="8.2,0 8.2,8.7 0,4.35" fill="#1a6fc8"/></svg></div>
<div class="lk" style="left:639px;top:599px;width:31px;height:29px"><svg class="a" style="left:10.5px;top:2.9px" width="9.4" height="7" viewBox="0 0 9.4 7"><polygon points="0,0 9.4,0 4.7,7" fill="#1a6fc8"/></svg></div>
<div class="lk" style="left:673px;top:599px;width:31px;height:29px"><svg class="a" style="left:10px;top:2.3px" width="8.2" height="8.7" viewBox="0 0 8.2 8.7"><polygon points="0,0 8.2,4.35 0,8.7" fill="#1a6fc8"/></svg></div>
<div class="lk" style="left:716px;top:471px;width:31px;height:29px"><div class="lt" style="top:0.9px">Num</div><div class="lt" style="top:14.9px">Lock</div></div>
<div class="lk" style="left:750px;top:471px;width:31px;height:29px"><div class="lt" style="top:0.9px">/</div></div>
<div class="lk" style="left:784px;top:471px;width:31px;height:29px"><div class="lt" style="top:0.9px">*</div></div>
<div class="lk" style="left:818px;top:471px;width:31px;height:29px"><div class="lt" style="top:0.9px">-</div></div>
<div class="lk" style="left:716px;top:503px;width:31px;height:29px"><div class="lt" style="top:0.9px">7</div><div class="lt" style="top:14.9px">Home</div></div>
<div class="lk" style="left:750px;top:503px;width:31px;height:29px"><div class="lt" style="top:0.9px">8</div><svg class="a" style="left:9.8px;top:17px" width="9.2" height="7" viewBox="0 0 9.2 7"><polygon points="4.6,0 9.2,7 0,7" fill="#1a6fc8"/></svg></div>
<div class="lk" style="left:784px;top:503px;width:31px;height:29px"><div class="lt" style="top:0.9px">9</div><div class="lt" style="top:14.9px">PgUp</div></div>
<div class="lk" style="left:818px;top:503px;width:31px;height:61px"><div class="lt" style="top:0.9px">+</div></div>
<div class="lk" style="left:716px;top:535px;width:31px;height:29px"><div class="lt" style="top:0.9px">4</div><svg class="a" style="left:10px;top:15.8px" width="8" height="8.2" viewBox="0 0 8 8.2"><polygon points="8,0 8,8.2 0,4.1" fill="#1a6fc8"/></svg></div>
<div class="lk" style="left:750px;top:535px;width:31px;height:29px"><div class="lt" style="top:0.9px">5</div></div>
<div class="lk" style="left:784px;top:535px;width:31px;height:29px"><div class="lt" style="top:0.9px">6</div><svg class="a" style="left:10.8px;top:16px" width="8" height="8" viewBox="0 0 8 8"><polygon points="0,0 8,4.0 0,8" fill="#1a6fc8"/></svg></div>
<div class="lk" style="left:716px;top:567px;width:31px;height:29px"><div class="lt" style="top:0.9px">1</div><div class="lt" style="top:14.9px">End</div></div>
<div class="lk" style="left:750px;top:567px;width:31px;height:29px"><div class="lt" style="top:0.9px">2</div><svg class="a" style="left:9.8px;top:15.5px" width="9.4" height="7.4" viewBox="0 0 9.4 7.4"><polygon points="0,0 9.4,0 4.7,7.4" fill="#1a6fc8"/></svg></div>
<div class="lk" style="left:784px;top:567px;width:31px;height:29px"><div class="lt" style="top:0.9px">3</div><div class="lt" style="top:14.9px">PgDn</div></div>
<div class="lk" style="left:818px;top:567px;width:31px;height:61px"><div class="lt" style="top:0.9px">Enter</div></div>
<div class="lk" style="left:716px;top:599px;width:65px;height:29px"><div class="lt" style="top:0.9px">0</div><div class="lt" style="top:14.9px">Ins</div></div>
<div class="lk" style="left:784px;top:599px;width:31px;height:29px"><div class="lt" style="top:0.9px">.</div><div class="lt" style="top:14.9px">Del</div></div>
<div class="lk" style="left:87px;top:647px;width:22px;height:21px"><div class="lt" style="top:1px;left:0;right:auto;padding-left:3px">Fn</div></div>
<div class="lk" style="left:121px;top:647px;width:22px;height:21px"></div>
<div class="lk" style="left:155px;top:647px;width:22px;height:21px"><svg class="a" style="left:-1px;top:-1px" width="22" height="21" viewBox="0 0 22 21"><path d="M6.75 8.6V7.75A3.6 3.6 0 0 1 13.95 7.75V8.6" fill="none" stroke="#0f78d7" stroke-width="2.1"/><rect x="5" y="8.2" width="11" height="7.7" fill="#0f78d7"/></svg></div>
<div class="lk" style="left:87px;top:679px;width:22px;height:21px"><svg class="a" style="left:-1px;top:-1px" width="22" height="21" viewBox="0 0 22 21"><polygon points="5.1,6.3 10.2,10.45 5.1,14.6" fill="#1a6fc4"/><rect x="12.1" y="5.7" width="1.9" height="9.9" fill="#1a6fc4"/><rect x="15.3" y="5.7" width="1.9" height="9.9" fill="#1a6fc4"/></svg></div>
<div class="lk" style="left:112px;top:679px;width:22px;height:21px"><svg class="a" style="left:-1px;top:-1px" width="22" height="21" viewBox="0 0 22 21"><rect x="4" y="5.3" width="1.1" height="10.2" fill="#1a6fc4"/><polygon points="5.2,10.1 11.5,6.1 11.5,14.1" fill="#1a6fc4"/><polygon points="11.3,10.1 17.9,6.1 17.9,14.1" fill="#1a6fc4"/></svg></div>
<div class="lk" style="left:138px;top:679px;width:22px;height:21px"><svg class="a" style="left:-1px;top:-1px" width="22" height="21" viewBox="0 0 22 21"><polygon points="3.8,6.4 10.1,10.5 3.8,14.6" fill="#1a6fc4"/><polygon points="10.1,6.4 17,10.5 10.1,14.6" fill="#1a6fc4"/><rect x="17" y="5.3" width="1.1" height="10.2" fill="#1a6fc4"/></svg></div>
<div class="lk" style="left:172px;top:679px;width:22px;height:21px"><svg class="a" style="left:-1px;top:-1px" width="22" height="21" viewBox="0 0 22 21"><polygon points="3.4,9 6.3,9 10.0,5.3 10.0,16.5 6.3,13.6 3.4,13.6" fill="#1a6fc4"/><path d="M12.1 11h6.6M15.4 7.7v6.6" stroke="#1a6fc4" stroke-width="1.1"/></svg></div>
<div class="lk" style="left:197px;top:679px;width:22px;height:21px"><svg class="a" style="left:-1px;top:-1px" width="22" height="21" viewBox="0 0 22 21"><polygon points="3.8,9 6.699999999999999,9 10.399999999999999,5.3 10.399999999999999,16.5 6.699999999999999,13.6 3.8,13.6" fill="#1a6fc4"/><path d="M12.3 10.7h5.8" stroke="#1a6fc4" stroke-width="1.1"/></svg></div>
<div class="lk" style="left:223px;top:679px;width:22px;height:21px"><svg class="a" style="left:-1px;top:-1px" width="22" height="21" viewBox="0 0 22 21"><polygon points="3.9,9 6.8,9 10.5,5.3 10.5,16.5 6.8,13.6 3.9,13.6" fill="#1a6fc4"/><path d="M13.2 7.8l5 5.3M18.2 7.8l-5 5.3" stroke="#1a6fc4" stroke-width="1.1"/></svg></div>
<div class="lk" style="left:257px;top:679px;width:22px;height:21px"><svg class="a" style="left:-1px;top:-1px" width="22" height="21" viewBox="0 0 22 21"><rect x="5.7" y="3.2" width="10.8" height="14.5" rx="1.2" fill="#1a6fc4"/><rect x="7" y="4.5" width="8" height="2.8" fill="#e8f4ff"/><rect x="7" y="9.4" width="2" height="1.7" fill="#e8f4ff"/><rect x="7" y="12.3" width="2" height="1.7" fill="#e8f4ff"/><rect x="7" y="15.2" width="2" height="1.7" fill="#e8f4ff"/><rect x="10.2" y="9.4" width="2" height="1.7" fill="#e8f4ff"/><rect x="10.2" y="12.3" width="2" height="1.7" fill="#e8f4ff"/><rect x="10.2" y="15.2" width="2" height="1.7" fill="#e8f4ff"/><rect x="13.1" y="9.4" width="2" height="1.7" fill="#e8f4ff"/><rect x="13.1" y="12.3" width="2" height="1.7" fill="#e8f4ff"/><rect x="13.1" y="15.2" width="2" height="1.7" fill="#e8f4ff"/></svg></div>
<div class="lk" style="left:282px;top:679px;width:22px;height:21px"><svg class="a" style="left:-1px;top:-1px" width="22" height="21" viewBox="0 0 22 21"><rect x="5.6" y="7.4" width="11.9" height="7" fill="none" stroke="#1a6fc4" stroke-width="1"/><path d="M5.6 7.4l5.8 4.5 5.8-4.5M5.6 14.4l4-3.5M17.5 14.4l-4-3.5" fill="none" stroke="#1a6fc4" stroke-width="0.9"/><rect x="5.1" y="14" width="12.9" height="1" fill="#1a6fc4"/></svg></div>
<div class="lk" style="left:308px;top:679px;width:22px;height:21px"><svg class="a" style="left:-1px;top:-1px" width="22" height="21" viewBox="0 0 22 21"><path d="M4 9.8L10.2 4L16.4 9.8" fill="none" stroke="#1a6fc4" stroke-width="0.9"/><polygon points="10.2,5.7 14.9,9.9 14.8,15.6 11.8,15.6 11.8,12.7 9.3,12.7 9.3,15.6 6.1,15.6 6.1,9.9 5.5,9.9" fill="#1a6fc4"/></svg></div>
<div class="a" style="left:83px;top:719px;width:735px;height:1px;background:#d4d4d4"></div>
<div class="a" style="left:469.5px;top:723.5px;font-size:12.5px;line-height:14px;letter-spacing:0.82px;color:#c6c6c6;white-space:nowrap">Copyright 2016 ZPZO Tech co.,LTD.All rights reserved.</div>
</body></html>
